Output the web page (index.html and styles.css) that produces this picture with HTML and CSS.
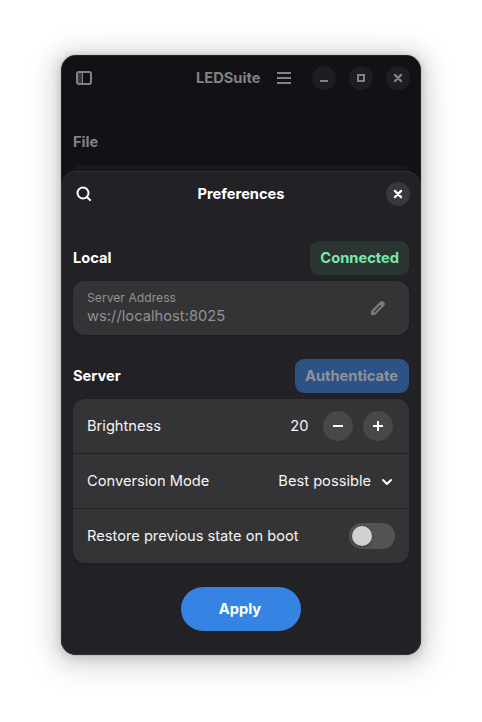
FILE: index.html
```html
<!DOCTYPE html>
<html lang="en">
<head>
<meta charset="utf-8">
<title>LEDSuite</title>
<link rel="stylesheet" href="styles.css">
</head>
<body>
<main class="window">
  <div class="backdrop">
    <header class="titlebar">
      <svg width="16" height="16" viewBox="0 0 16 16"><path fill="#38383b" d="M2 2h4v12H2z"/><path fill="none" stroke="#828184" stroke-width="2" d="M3 2h10a2 2 0 0 1 2 2v8a2 2 0 0 1-2 2H3a2 2 0 0 1-2-2V4a2 2 0 0 1 2-2z"/><path fill="#828184" d="M6 2h1v12H6z"/></svg>
      <h1 class="app-title">LEDSuite</h1>
      <svg class="menu-icon" width="16" height="16" viewBox="0 0 16 16"><path fill="#828184" d="M1 2h14v2H1zM1 7h14v2H1zM1 12h14v2H1z"/></svg>
      <div class="controls">
        <span class="round"><svg width="16" height="16" viewBox="0 0 16 16"><path fill="#828184" d="M4 10h8v2H4z"/></svg></span>
        <span class="round"><svg width="16" height="16" viewBox="0 0 16 16"><path fill="none" stroke="#828184" stroke-width="2" d="M5 5h6v6H5z"/></svg></span>
        <span class="round"><svg width="16" height="16" viewBox="0 0 16 16"><path stroke="#828184" stroke-width="2.200" stroke-linecap="round" d="M4.900 4.900l6.200 6.200M11.100 4.900l-6.200 6.200"/></svg></span>
      </div>
    </header>
    <h2 class="file-title">File</h2>
    <div class="hidden-card"></div>
  </div>
  <section class="sheet">
    <header class="sheet-header">
      <svg width="16" height="16" viewBox="0 0 16 16"><circle cx="7" cy="7" r="5.500" fill="none" stroke="#fff" stroke-width="2"/><path stroke="#fff" stroke-width="2.200" stroke-linecap="round" d="M11 11l3 3"/></svg>
      <h2 class="sheet-title">Preferences</h2>
      <span class="round round-close"><svg width="16" height="16" viewBox="0 0 16 16"><path stroke="#fff" stroke-width="2.200" stroke-linecap="round" d="M4.900 4.900l6.200 6.200M11.100 4.900l-6.200 6.200"/></svg></span>
    </header>
    <div class="group-head">
      <h3>Local</h3>
      <span class="tag connected">Connected</span>
    </div>
    <div class="card">
      <div class="row entry">
        <div class="entry-text">
          <span class="caption">Server Address</span>
          <span class="value">ws://localhost:8025</span>
        </div>
        <svg class="pencil" width="16" height="16" viewBox="0 0 16 16"><path fill="#7b7b7d" fill-rule="evenodd" d="M1 15v-4L10.200 1.800a2.600 2.600 0 0 1 3.600 0l.4.4a2.600 2.600 0 0 1 0 3.600L5 15zM3.500 12.500l1-.1L11 5.900l-.9-.9L3.600 11.500z"/></svg>
      </div>
    </div>
    <div class="group-head">
      <h3>Server</h3>
      <span class="tag authenticate">Authenticate</span>
    </div>
    <div class="card">
      <div class="row">
        <span>Brightness</span>
        <div class="spin">
          <span class="number">20</span>
          <span class="step"><svg width="16" height="16" viewBox="0 0 16 16"><path fill="#fff" d="M3 7h10v2H3z"/></svg></span>
          <span class="step"><svg width="16" height="16" viewBox="0 0 16 16"><path fill="#fff" d="M7 3h2v4h4v2H9v4H7V9H3V7h4z"/></svg></span>
        </div>
      </div>
      <div class="row">
        <span>Conversion Mode</span>
        <div class="combo">
          <span>Best possible</span>
          <svg width="16" height="16" viewBox="0 0 16 16"><path fill="none" stroke="#fff" stroke-width="2" stroke-linecap="round" stroke-linejoin="round" d="M4 7l4 4 4-4"/></svg>
        </div>
      </div>
      <div class="row">
        <span>Restore previous state on boot</span>
        <span class="switch"><span class="knob"></span></span>
      </div>
    </div>
    <div class="apply">Apply</div>
  </section>
</main>
</body>
</html>
```
FILE: styles.css
```css
* { box-sizing: border-box; }
body {
  margin: 0;
  padding: 55px 61px;
  background: #fff;
  color: #f5f5f5;
  font: 14.67px/20px Inter, "Liberation Sans", sans-serif;
}
svg { display: block; flex: none; }
h1, h2, h3 { margin: 0; font-size: inherit; font-weight: 700; }
.window {
  position: relative;
  width: 360px;
  height: 600px;
  border-radius: 15px;
  overflow: hidden;
  background: #121116;
  box-shadow: 0 2px 8px 2px rgba(0, 0, 0, .13), 0 3px 20px 10px rgba(0, 0, 0, .09), 0 6px 32px 16px rgba(0, 0, 0, .04), 0 0 0 1px rgba(0, 0, 0, .05);
}
.window::after {
  content: "";
  position: absolute;
  inset: 0;
  border-radius: 15px;
  box-shadow: inset 0 0 0 1px rgba(255, 255, 255, .07);
}
.backdrop { height: 116px; color: #828184; }
.titlebar { display: flex; align-items: center; height: 46px; padding: 0 11px 0 15px; }
.app-title { margin-left: 104px; width: 65px; white-space: nowrap; }
.menu-icon { margin-left: 15px; }
.controls { display: flex; gap: 13px; margin-left: auto; }
.round {
  display: grid;
  place-items: center;
  width: 24px;
  height: 24px;
  border-radius: 50%;
  background: #1e1d22;
}
.file-title { margin: 31px 12px 0; }
.hidden-card { margin: 13px 12px 0; height: 6px; border-radius: 12px 12px 0 0; background: #19181c; }
.sheet {
  height: 484px;
  padding: 0 12px;
  border-radius: 15px 15px 0 0;
  background: #222226;
  box-shadow: inset 0 1px #303034;
}
.sheet-header { display: flex; align-items: center; justify-content: space-between; height: 46px; margin: 0 -1px 24px 2.500px; color: #fff; }
.sheet-title { margin-left: 4.500px; }
.round-close { background: #39383c; }
.group-head { display: flex; justify-content: space-between; align-items: center; height: 34px; margin-bottom: 6px; color: #fff; }
.tag { height: 34px; padding: 7px 10px; border-radius: 9px; font-weight: 700; }
.connected { background: #2b3633; color: #78e9ab; }
.authenticate { width: 114px; background: #2b5386; color: #919196; }
.card { margin-bottom: 24px; border-radius: 12px; background: #343437; box-shadow: 0 1px 3px rgba(0, 0, 0, .15); }
.row { display: flex; align-items: center; justify-content: space-between; height: 54px; padding: 0 14px; }
.row + .row { height: 55px; border-top: 1px solid #222226; }
.entry { color: #929294; }
.entry-text { display: flex; flex-direction: column; }
.caption { font-size: 12.100px; line-height: 16px; letter-spacing: .04px; }
.value { line-height: 20px; letter-spacing: .04px; }
.pencil { margin-right: 9px; }
.spin { display: flex; align-items: center; gap: 10px; margin-right: 2px; }
.number { margin-right: 4.500px; }
.step { display: grid; place-items: center; width: 30px; height: 30px; border-radius: 50%; background: #48484b; }
.combo { display: flex; align-items: center; gap: 8px; }
.switch { width: 46px; height: 26px; padding: 3px; border-radius: 13px; background: #535355; }
.knob { display: block; width: 20px; height: 20px; border-radius: 50%; background: #d2d2d2; box-shadow: 0 1px 3px rgba(0, 0, 0, .3); }
.apply {
  width: 120px;
  height: 44px;
  margin: 0 auto;
  padding-right: 2px;
  border-radius: 22px;
  background: #3584e4;
  color: #fff;
  font-weight: 700;
  line-height: 44px;
  text-align: center;
}
```
